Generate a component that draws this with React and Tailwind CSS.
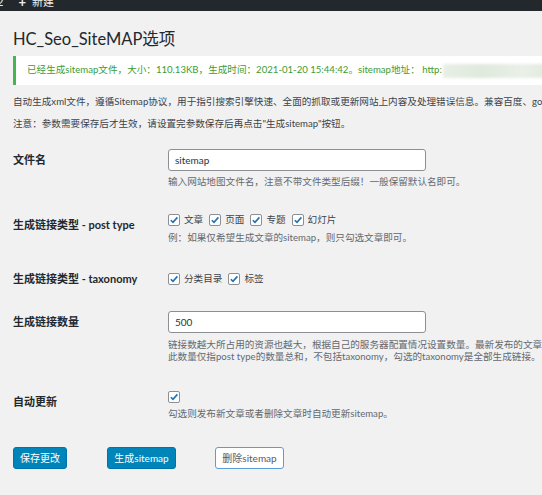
import React from "react";

const font = { fontFamily: 'Lato, "Noto Sans CJK SC", sans-serif' };

function Check() {
  return (
    <span className="inline-flex items-center justify-center w-[12px] h-[12px] bg-white border border-[#8c8f94] rounded-[2px] shrink-0">
      <svg width="10" height="10" viewBox="0 0 10 10">
        <path d="M1.8 5.2 L4 7.4 L8.4 2.4" fill="none" stroke="#2271b1" strokeWidth="1.6" />
      </svg>
    </span>
  );
}

function Row({ label, children, className = "" }) {
  return (
    <div className={"flex " + className}>
      <div className="w-[155px] shrink-0 font-bold text-[#23282d] text-[11px] leading-[14px]">{label}</div>
      <div className="flex-1 min-w-0">{children}</div>
    </div>
  );
}

export default function App() {
  return (
    <div className="w-[542px] h-[495px] bg-[#f1f1f1] overflow-hidden text-[9.6px] text-[#3c434a]" style={font}>
      {/* admin bar */}
      <div className="h-[11px] bg-[#23282d] flex items-end overflow-hidden text-[#eee] text-[11px] leading-[14px]">
        <span className="-ml-[3px] mb-[2px]">2</span>
        <span className="ml-[15px] mb-[2px] font-bold text-[13px]">+</span>
        <span className="ml-[6px] mb-[2px]">新建</span>
      </div>

      <div className="pl-[13px]">
        <h1 className="text-[16.5px] leading-[22px] text-[#23282d] pt-[17px]">HC_Seo_SiteMAP选项</h1>

        <div className="mt-[6px] h-[29px] bg-white border-l-[3px] border-[#46b450] flex items-center pl-[11px] text-[#3d9b35] whitespace-nowrap overflow-hidden">
          <span>已经生成sitemap文件，大小：110.13KB，生成时间：2021-01-20 15:44:42。sitemap地址： http:</span>
          <span className="ml-[1px] h-[14px] w-[200px] shrink-0 bg-[linear-gradient(90deg,#e8efe6,#dfe9dc,#eaf0e8,#dbe6da,#e6eee4,#d6e4dc)] blur-[1.5px]" />
        </div>

        <p className="mt-[11px] leading-[12px] whitespace-nowrap">自动生成xml文件，遵循Sitemap协议，用于指引搜索引擎快速、全面的抓取或更新网站上内容及处理错误信息。兼容百度、google等搜索引擎。</p>
        <p className="mt-[10px] leading-[12px] whitespace-nowrap">注意：参数需要保存后才生效，请设置完参数保存后再点击"生成sitemap"按钮。</p>

        <div className="mt-[19px]">
          <Row label={<div className="pt-[4px]">文件名</div>}>
            <input
              defaultValue="sitemap"
              className="w-[258px] h-[22px] bg-white border border-[#8c8f94] rounded-[3px] px-[6px] text-[10px] text-[#2c3338] outline-none"
              style={font}
            />
            <div className="mt-[5px] leading-[12px] text-[#646970] whitespace-nowrap">输入网站地图文件名，注意不带文件类型后缀！一般保留默认名即可。</div>
          </Row>

          <Row className="mt-[25px]" label={<div className="pt-[5px]">生成链接类型 - post type</div>}>
            <div className="flex items-center gap-[4px] whitespace-nowrap h-[14px]">
              <Check /><span className="mr-[2px]">文章</span>
              <Check /><span className="mr-[2px]">页面</span>
              <Check /><span className="mr-[2px]">专题</span>
              <Check /><span>幻灯片</span>
            </div>
            <div className="mt-[5px] leading-[12px] text-[#646970] whitespace-nowrap">例：如果仅希望生成文章的sitemap，则只勾选文章即可。</div>
          </Row>

          <Row className="mt-[28px]" label={<div>生成链接类型 - taxonomy</div>}>
            <div className="flex items-center gap-[4px] whitespace-nowrap h-[14px]">
              <Check /><span className="mr-[2px]">分类目录</span>
              <Check /><span>标签</span>
            </div>
          </Row>

          <Row className="mt-[25px]" label={<div className="pt-[4px]">生成链接数量</div>}>
            <input
              defaultValue="500"
              className="w-[258px] h-[22px] bg-white border border-[#8c8f94] rounded-[3px] px-[6px] text-[10px] text-[#2c3338] outline-none"
              style={font}
            />
            <div className="mt-[6px] text-[#646970] whitespace-nowrap leading-[12px]">链接数越大所占用的资源也越大，根据自己的服务器配置情况设置数量。最新发布的文章优先生成。</div>
            <div className="text-[#646970] whitespace-nowrap leading-[12px]">此数量仅指post type的数量总和，不包括taxonomy，勾选的taxonomy是全部生成链接。</div>
          </Row>

          <Row className="mt-[27px]" label={<div className="pt-[5px]">自动更新</div>}>
            <div className="h-[14px] flex items-center"><Check /></div>
            <div className="mt-[4px] leading-[12px] text-[#646970] whitespace-nowrap">勾选则发布新文章或者删除文章时自动更新sitemap。</div>
          </Row>
        </div>

        <div className="mt-[27px] flex items-center">
          <button className="h-[22px] w-[54px] bg-[#0085ba] border border-[#0073aa] rounded-[3px] text-white text-[10px]" style={font}>保存更改</button>
          <button className="ml-[40px] h-[22px] w-[69px] bg-[#0085ba] border border-[#0073aa] rounded-[3px] text-white text-[10px]" style={font}>生成sitemap</button>
          <button className="ml-[39px] h-[22px] w-[69px] bg-white border border-[#5b9dd9] rounded-[3px] text-[#555d66] text-[10px]" style={font}>删除sitemap</button>
        </div>
      </div>
    </div>
  );
}
